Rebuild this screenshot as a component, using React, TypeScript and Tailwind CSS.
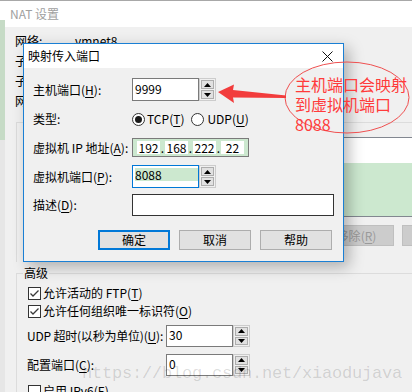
import React from "react";

function Key({ k }: { k: string }) {
  return (
    <>
      (<span className="underline underline-offset-2">{k}</span>)
    </>
  );
}

function Tri({ up }: { up?: boolean }) {
  return (
    <svg width="7" height="4" viewBox="0 0 7 4">
      <path d={up ? "M0 4L3.5 0L7 4Z" : "M0 0L3.5 4L7 0Z"} fill="#000" />
    </svg>
  );
}

function Spin() {
  return (
    <div className="flex h-full w-[17px] flex-col gap-px border border-[#cccccc] bg-[#f0f0f0] p-px">
      <div className="flex flex-1 items-center justify-center border border-[#adadad] bg-[#e1e1e1]">
        <Tri up />
      </div>
      <div className="flex flex-1 items-center justify-center border border-[#adadad] bg-[#e1e1e1]">
        <Tri />
      </div>
    </div>
  );
}

function Check({ on }: { on?: boolean }) {
  return (
    <div className="flex h-[13px] w-[13px] shrink-0 items-center justify-center border border-[#333333] bg-white">
      {on && (
        <svg width="11" height="11" viewBox="0 0 11 11">
          <path d="M1.5 5.5L4 8L9.5 2.5" fill="none" stroke="#3a3a3a" strokeWidth="1.3" />
        </svg>
      )}
    </div>
  );
}

function Radio({ on }: { on?: boolean }) {
  return (
    <div className="flex h-[13px] w-[13px] shrink-0 items-center justify-center rounded-full border border-[#333333] bg-white">
      {on && <div className="h-[7px] w-[7px] rounded-full bg-[#1a1a1a]" />}
    </div>
  );
}

function Seg({ v }: { v: string }) {
  return <div className="flex h-[13px] w-[23px] items-center justify-center bg-white leading-[13px]">{v}</div>;
}

function Dot() {
  return <div className="flex h-[13px] w-[5px] items-end justify-center leading-[13px]">.</div>;
}

export default function App() {
  return (
    <div className="relative flex h-[392px] w-[412px] flex-col overflow-hidden bg-[#f0f0f0] font-[family-name:'Noto_Sans_CJK_SC','Noto_Sans',sans-serif] text-[12px] text-black">
      <div className="h-px w-full shrink-0 bg-[#a8a8a8]" />
      <div className="flex flex-1">
        {/* left strip of the window behind */}
        <div className="flex w-[5px] shrink-0 flex-col">
          <div className="h-[19px] bg-white" />
          <div className="h-[120px] bg-[#c6dbc6]" />
          <div className="flex-1 bg-[#e6e6e6]" />
        </div>
        {/* NAT 设置 window */}
        <div className="flex flex-1 flex-col">
          <div className="flex h-[26px] shrink-0 items-center bg-white pl-[5px] text-[#a0a0a0]">NAT 设置</div>
          <div className="flex flex-col pt-[4px]">
            <div className="flex h-[20px] items-center pl-[10px]">
              <div className="w-[60px]">网络:</div>
              <div>vmnet8</div>
            </div>
            <div className="flex h-[20px] items-center pl-[10px]">
              <div className="w-[80px]">子网 IP:</div>
              <div>192.168.222.0</div>
            </div>
            <div className="flex h-[20px] items-center pl-[10px]">
              <div className="w-[80px]">子网掩码:</div>
              <div>255.255.255.0</div>
            </div>
            <div className="flex h-[20px] items-center pl-[10px]">
              <div className="w-[80px]">网关 IP(G):</div>
              <div>192.168.222.2</div>
            </div>

            {/* port forwarding group */}
            <div className="ml-[11px] mt-[11px] flex h-[140px] flex-col border-l border-t border-[#dcdcdc] pt-[14px]">
              <div className="ml-[7px] mr-[-80px] flex flex-col border-b border-t border-[#828790]">
                <div className="h-[25px] bg-white" />
                <div className="h-[53px] bg-[#cce8cf]" />
              </div>
              <div className="ml-[219px] mt-[8px] flex gap-[8px]">
                <div className="flex h-[21px] w-[75px] shrink-0 items-center justify-center border border-[#adadad] bg-[#e1e1e1]">添加(A)...</div>
                <div className="flex h-[21px] w-[75px] shrink-0 items-center justify-center border border-[#bfbfbf] bg-[#cccccc] text-[#9a9a9a]">
                  移除<Key k="R" />
                </div>
                <div className="flex h-[21px] w-[75px] shrink-0 items-center justify-center whitespace-nowrap border border-[#bfbfbf] bg-[#cccccc] text-[#9a9a9a]">
                  属性
                </div>
              </div>
            </div>

            {/* 高级 group */}
            <fieldset className="ml-[11px] mt-[4px] flex flex-col border-l border-t border-[#dcdcdc]">
              <legend className="ml-[6px] px-px leading-[14px]">高级</legend>
              <div className="mt-[4px] flex h-[18px] items-center pl-[11px]">
                <Check on />
                <div className="ml-[2px]">
                  允许活动的 FTP<Key k="T" />
                </div>
              </div>
              <div className="flex h-[18px] items-center pl-[11px]">
                <Check on />
                <div className="ml-[2px]">
                  允许任何组织唯一标识符<Key k="O" />
                </div>
              </div>
              <div className="mt-[5px] flex h-[22px] items-center pl-[10px]">
                <div className="w-[139px] shrink-0 whitespace-nowrap tracking-[-0.2px]">
                  UDP 超时(以秒为单位)<Key k="U" />:
                </div>
                <div className="flex h-full">
                  <div className="h-full w-[67px] border border-[#7a7a7a] bg-white pl-[2px] pt-[1px] leading-[16px]">30</div>
                  <Spin />
                </div>
              </div>
              <div className="mt-[7px] flex h-[22px] items-center pl-[10px]">
                <div className="w-[139px] shrink-0 whitespace-nowrap">
                  配置端口<Key k="C" />:
                </div>
                <div className="flex h-full">
                  <div className="h-full w-[67px] border border-[#7a7a7a] bg-white pl-[2px] pt-[1px] leading-[16px]">0</div>
                  <Spin />
                </div>
              </div>
              <div className="mt-[6px] flex h-[18px] items-center pl-[11px]">
                <Check />
                <div className="ml-[2px]">
                  启用 IPv6<Key k="E" />
                </div>
              </div>
            </fieldset>
          </div>
        </div>
      </div>

      {/* 映射传入端口 dialog */}
      <div className="absolute left-[23px] top-[43px] flex h-[219px] w-[321px] flex-col border border-[#1a7fd4] bg-[#f0f0f0] shadow-[5px_5px_14px_rgba(0,0,0,0.28)]">
        <div className="flex h-[24px] shrink-0 items-center justify-between bg-white pl-[4px] pr-[10px]">
          <div>映射传入端口</div>
          <svg width="11" height="11" viewBox="0 0 11 11">
            <path d="M0.5 0.5L10.5 10.5M10.5 0.5L0.5 10.5" stroke="#111" strokeWidth="1" />
          </svg>
        </div>
        <div className="flex flex-1 flex-col pl-[9px]">
          <div className="mt-[10px] flex h-[23px] items-center">
            <div className="w-[99px]">
              主机端口<Key k="H" />:
            </div>
            <div className="flex h-full">
              <div className="flex h-full w-[67px] items-center border border-[#7a7a7a] bg-white pb-[2px] pl-[2px]">9999</div>
              <Spin />
            </div>
          </div>
          <div className="mt-[11px] flex h-[14px] items-center">
            <div className="w-[99px]">类型:</div>
            <Radio on />
            <div className="ml-[2px]">
              TCP<Key k="T" />
            </div>
            <div className="ml-[7px]">
              <Radio />
            </div>
            <div className="ml-[3px]">
              UDP<Key k="U" />
            </div>
          </div>
          <div className="mt-[12px] flex h-[19px] items-center">
            <div className="w-[99px]">
              虚拟机 IP 地址<Key k="A" />:
            </div>
            <div className="flex h-full w-[117px] items-center border border-[#7a7a7a] bg-[#cce8cf] pl-[4px]">
              <Seg v="192" />
              <Dot />
              <Seg v="168" />
              <Dot />
              <Seg v="222" />
              <Dot />
              <Seg v="22" />
            </div>
          </div>
          <div className="mt-[8px] flex h-[23px] items-center">
            <div className="w-[99px]">
              虚拟机端口<Key k="P" />:
            </div>
            <div className="flex h-full">
              <div className="h-full w-[67px] border border-[#0078d7] bg-white pl-[2px] pt-[2px]">
                <div className="h-[13px] w-[63px] bg-[#cce8cf] leading-[13px]">8088</div>
              </div>
              <Spin />
            </div>
          </div>
          <div className="mt-[6px] flex h-[22px] items-center">
            <div className="w-[99px]">
              描述<Key k="D" />:
            </div>
            <div className="h-full w-[202px] border border-[#333333] bg-white" />
          </div>
          <div className="ml-[65px] mt-[14px] flex h-[20px] gap-[9px]">
            <div className="flex h-full w-[72px] items-center justify-center border-2 border-[#0078d7] bg-[#e1e1e1]">确定</div>
            <div className="flex h-full w-[72px] items-center justify-center border border-[#adadad] bg-[#e1e1e1]">取消</div>
            <div className="flex h-full w-[72px] items-center justify-center border border-[#adadad] bg-[#e1e1e1]">帮助</div>
          </div>
        </div>
      </div>

      {/* red annotation */}
      <svg className="pointer-events-none absolute left-0 top-0" width="412" height="392" viewBox="0 0 412 392">
        <ellipse cx="347" cy="97.5" rx="62" ry="35.5" fill="none" stroke="#ef5050" strokeWidth="1" />
        <polygon points="218,92 234,84.5 233,90 286,95.5 286,98 233,97.5 234,103" fill="#f23c3c" />
      </svg>
      <div className="pointer-events-none absolute left-[295px] top-[74px] text-[16px] leading-[20px] text-[#ff3b3b]">
        <div>主机端口会映射</div>
        <div>到虚拟机端口</div>
        <div>8088</div>
      </div>

      {/* watermark */}
      <div className="pointer-events-none absolute left-[82px] top-[365px] whitespace-nowrap font-[family-name:'Liberation_Mono',monospace] text-[17px] leading-[17px] tracking-[-0.2px] text-[rgba(0,0,0,0.14)]">
        https://blog.csdn.net/xiaodujava
      </div>
    </div>
  );
}
